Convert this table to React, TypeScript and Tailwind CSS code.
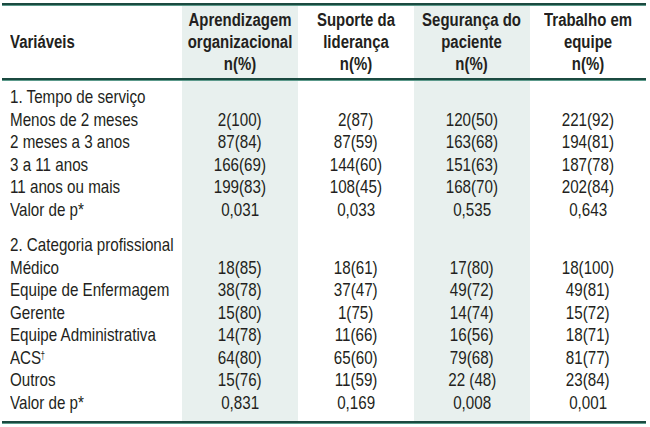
import React from 'react';
import clsx from 'clsx';

type Row = string[];

const shade = [false, true, false, true, false];

const header: React.ReactNode[] = [
  'Variáveis',
  <>Aprendizagem<br />organizacional<br />n(%)</>,
  <>Suporte da<br />liderança<br />n(%)</>,
  <>Segurança do<br />paciente<br />n(%)</>,
  <>Trabalho em<br />equipe<br />n(%)</>,
];

const sections: { title: string; rows: Row[] }[] = [
  {
    title: '1. Tempo de serviço',
    rows: [
      ['Menos de 2 meses', '2(100)', '2(87)', '120(50)', '221(92)'],
      ['2 meses a 3 anos', '87(84)', '87(59)', '163(68)', '194(81)'],
      ['3 a 11 anos', '166(69)', '144(60)', '151(63)', '187(78)'],
      ['11 anos ou mais', '199(83)', '108(45)', '168(70)', '202(84)'],
      ['Valor de p*', '0,031', '0,033', '0,535', '0,643'],
    ],
  },
  {
    title: '2. Categoria profissional',
    rows: [
      ['Médico', '18(85)', '18(61)', '17(80)', '18(100)'],
      ['Equipe de Enfermagem', '38(78)', '37(47)', '49(72)', '49(81)'],
      ['Gerente', '15(80)', '1(75)', '14(74)', '15(72)'],
      ['Equipe Administrativa', '14(78)', '11(66)', '16(56)', '18(71)'],
      ['ACS†', '64(80)', '65(60)', '79(68)', '81(77)'],
      ['Outros', '15(76)', '11(59)', '22 (48)', '23(84)'],
      ['Valor de p*', '0,831', '0,169', '0,008', '0,001'],
    ],
  },
];

// narrow face: Liberation Sans squeezed to Arial Narrow proportions
const Narrow = ({ left, bold, children }: { left?: boolean; bold?: boolean; children: React.ReactNode }) => (
  <span
    className={clsx(
      'inline-block whitespace-nowrap',
      bold ? 'scale-x-[0.83]' : 'scale-x-[0.82]',
      left ? 'origin-left' : 'origin-center'
    )}
  >
    {children}
  </span>
);

const Rule = () => (
  <div>
    <div className="h-[2px] bg-[#1b4a40]" />
    <div className="h-px bg-[#5c9a8b]" />
  </div>
);

const Spacer = ({ h }: { h: string }) => (
  <>
    {shade.map((s, i) => (
      <div key={i} className={clsx(h, s && 'bg-[#e8f0ee]')} />
    ))}
  </>
);

const renderLabel = (text: string) =>
  text.endsWith('†') ? (
    <>
      {text.slice(0, -1)}
      <sup className="text-[10px] -ml-px">†</sup>
    </>
  ) : (
    text
  );

const BodyRow = ({ cells }: { cells: string[] }) => (
  <>
    {cells.map((c, i) => (
      <div
        key={i}
        className={clsx(
          'leading-[22.5px] h-[22.5px] whitespace-nowrap',
          i === 0 ? 'pl-[8px] text-left' : 'text-center',
          shade[i] && 'bg-[#e8f0ee]'
        )}
      >
        {c && <Narrow left={i === 0}>{i === 0 ? renderLabel(c) : c}</Narrow>}
      </div>
    ))}
  </>
);

export default function App() {
  return (
    <div className="w-[650px] h-[427px] bg-white pt-[3px] font-['Liberation_Sans',Arial,sans-serif] text-[18.5px] text-[#231f20]">
      <div className="ml-[2px] w-[644px]">
        <Rule />
        <div className="grid grid-cols-[180px_repeat(4,116px)] h-[72px]">
          {header.map((h, i) => (
            <div
              key={i}
              className={clsx(
                'font-bold text-[18px] leading-[22px] flex items-center',
                i === 0 ? 'pl-[8px] justify-start' : 'justify-center text-center',
                shade[i] && 'bg-[#e8f0ee]'
              )}
            >
              <Narrow bold left={i === 0}>{h}</Narrow>
            </div>
          ))}
        </div>
        <Rule />
        <div className="grid grid-cols-[180px_repeat(4,116px)]">
          <Spacer h="h-[5px]" />
          {sections.map((s, si) => (
            <React.Fragment key={s.title}>
              {si > 0 && <Spacer h="h-[13px]" />}
              <BodyRow cells={[s.title, '', '', '', '']} />
              {s.rows.map((r) => (
                <BodyRow key={r[0]} cells={r} />
              ))}
            </React.Fragment>
          ))}
          <Spacer h="h-[7px]" />
        </div>
        <Rule />
      </div>
    </div>
  );
}
